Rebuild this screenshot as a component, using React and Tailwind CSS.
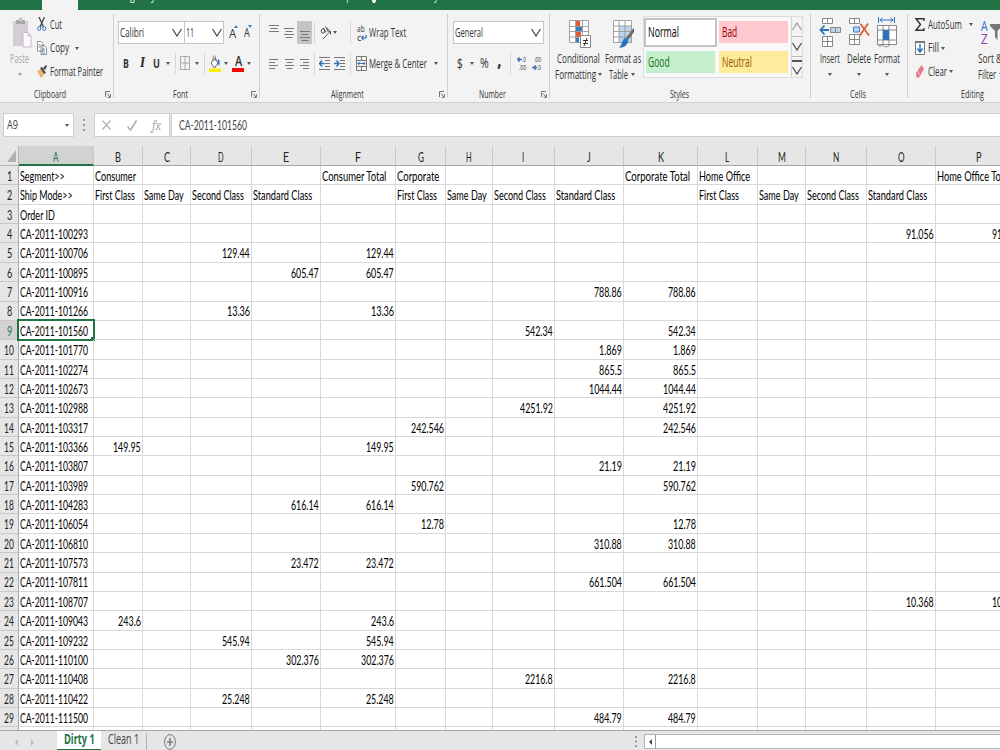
import { useLayoutEffect, useRef, useState } from "react";

// Narrow text: squeezes its content horizontally to the given width
function Fit({ w, className = "", children }) {
  const ref = useRef(null);
  const [scale, setScale] = useState(1);

  useLayoutEffect(() => {
    setScale(w / ref.current.offsetWidth);
  }, [w]);

  return (
    <span className={`block flex-none whitespace-nowrap ${className}`} style={{ width: w }}>
      <span ref={ref} className="inline-block origin-left" style={{ transform: `scaleX(${scale})` }}>
        {children}
      </span>
    </span>
  );
}

function Caret({ className = "" }) {
  return (
    <svg viewBox="0 0 4 3" className={`h-[3px] w-[4px] flex-none ${className}`}>
      <path d="M0 0h4L2 3z" fill="#555" />
    </svg>
  );
}

function Chevron({ className = "" }) {
  return (
    <svg viewBox="0 0 10 9" className={`h-[9px] w-[10px] flex-none ${className}`}>
      <path d="M.5 1 5 8 9.500 1" fill="none" stroke="#444" strokeWidth="1.2" />
    </svg>
  );
}

function Launcher() {
  return (
    <svg viewBox="0 0 6 7" className="h-[7px] w-[6px] flex-none" fill="none" stroke="#666" strokeWidth=".9">
      <path d="M.5 6V.5H5M2 2.500 5 6M5.400 3v3.400H2.500" />
    </svg>
  );
}

function Divider({ className = "" }) {
  return <div className={`h-[22px] w-px flex-none bg-[#d8d8d8] ${className}`} />;
}

function Group({ width, label, labelWidth, launcher, children }) {
  return (
    <div className={`relative flex h-[92px] flex-none flex-col ${width}`}>
      <div className="h-[76px] flex-none">{children}</div>
      <div className={`flex h-[15px] flex-none items-center justify-center ${launcher ? "pr-[14px]" : "pr-[3px]"}`}>
        <Fit w={labelWidth} className="text-[11.500px] leading-[15px]">{label}</Fit>
      </div>
      {launcher && (
        <div className="absolute right-[3px] bottom-[4px]">
          <Launcher />
        </div>
      )}
      <div className="absolute top-[4px] right-0 h-[84px] w-px bg-[#d0d0d0]" />
    </div>
  );
}

function Lines({ kind, className = "" }) {
  const paths = {
    top: "M0 .5h10M1.500 3.500h7M0 6.500h10",
    middle: "M0 .5h10M1.500 3.500h7M0 6.500h10M1.500 9.500h7",
    left: "M0 .5h9M0 3.500h6M0 6.500h9M0 9.500h6",
    center: "M0 .5h9M1.500 3.500h6M0 6.500h9M1.500 9.500h6",
    right: "M0 .5h9M3 3.500h6M0 6.500h9M3 9.500h6",
  };
  return (
    <svg viewBox="0 0 10 10" className={`h-[10px] w-[10px] flex-none ${className}`}>
      <path d={paths[kind]} stroke="#777" strokeWidth="1" />
    </svg>
  );
}

function Clipboard() {
  return (
    <Group width="w-[114px]" label="Clipboard" labelWidth={32} launcher>
      <div className="flex">
        <div className="flex w-[37px] flex-none flex-col items-center pt-[7px] text-[#aaa]">
          <svg viewBox="0 0 20 32" className="ml-[6px] h-[32px] w-[20px]">
            <path d="M1 4h15v25H1z" fill="#d3ced3" />
            <path d="M4 7V3h2.500C7 0 10 0 10.500 3H13v4z" fill="#aaa6aa" />
            <circle cx="8.500" cy="3" r="1" fill="#f3f3f3" />
            <path d="M11 15.500h5l3 3.500v11h-8z" fill="#fbfbfb" stroke="#c4bcc8" />
            <path d="M16 15.500V19h3" fill="none" stroke="#c4bcc8" />
          </svg>
          <Fit w={19} className="mt-[2px] ml-[2px] leading-[15px]">Paste</Fit>
          <Caret className="mt-[7px] ml-[3px] opacity-50" />
        </div>
        <div className="flex flex-col pt-[3px]">
          <div className="flex h-[23px] items-center">
            <svg viewBox="0 0 10 15" className="h-[15px] w-[10px]" fill="none">
              <path d="M2 0 6.500 10M7.500 0 3 10" stroke="#444" strokeWidth="1.300" />
              <ellipse cx="2.200" cy="11.500" rx="1.600" ry="2" stroke="#3b7cc0" />
              <ellipse cx="7.300" cy="11.500" rx="1.600" ry="2" stroke="#3b7cc0" />
            </svg>
            <Fit w={12} className="ml-[3px]">Cut</Fit>
          </div>
          <div className="flex h-[24px] items-center">
            <svg viewBox="0 0 10 14" className="h-[14px] w-[10px]" fill="#fff" stroke="#777" strokeWidth=".8">
              <path d="M.5.5h3.500l2 2.500v7H.5zM4 4.500h3.500l2 2.500v6.500H4z" />
              <path d="M1.500 4h2M1.500 6h2M5 8h3M5 10h3M5 12h3" stroke="#3b7cc0" />
            </svg>
            <Fit w={19} className="ml-[3px]">Copy</Fit>
            <Caret className="ml-[6px]" />
          </div>
          <div className="flex h-[23px] items-center">
            <svg viewBox="0 0 10 13" className="h-[13px] w-[10px]">
              <path d="M0 6 4 4l3 6-3 3z" fill="#eab567" />
              <path d="M3 3l2-1 4 6-2 1zM6 3l3-3 1 1-2 4z" fill="#444" />
            </svg>
            <Fit w={53} className="ml-[3px]">Format Painter</Fit>
          </div>
        </div>
      </div>
    </Group>
  );
}

function Font() {
  return (
    <Group width="w-[146px]" label="Font" labelWidth={15} launcher>
      <div className="flex pt-[11px] pl-[4px]">
        <div className="flex h-[23px] w-[67px] items-center border border-[#c6c6c6] bg-white pl-px">
          <Fit w={24}>Calibri</Fit>
          <Chevron className="ml-[28px]" />
        </div>
        <div className="-ml-px flex h-[23px] w-[40px] items-center border border-[#c6c6c6] bg-white pl-px">
          <Fit w={8}>11</Fit>
          <Chevron className="ml-[18px]" />
        </div>
        <div className="relative ml-[5px] flex h-[23px] items-center text-[13px]">
          <Fit w={7}>A</Fit>
          <Fit w={6} className="ml-[8px] text-[12px]">A</Fit>
          <svg viewBox="0 0 24 4" className="absolute top-[4px] left-0 h-[4px] w-[24px]" fill="#3b7cc0">
            <path d="M5 3l2-3 2 3zM19 0h4l-2 3z" />
          </svg>
        </div>
      </div>
      <div className="flex h-[38px] items-center pl-[9px]">
        <Fit w={6} className="text-[13px] font-bold">B</Fit>
        <Fit w={5} className="ml-[11px] font-serif text-[14px] font-bold italic">I</Fit>
        <Fit w={7} className="ml-[8px] text-[13px] font-bold underline">U</Fit>
        <Caret className="ml-[6px]" />
        <Divider className="ml-[5px]" />
        <svg viewBox="0 0 10 14" className="ml-[4px] h-[14px] w-[10px]" fill="none" stroke="#aaa">
          <path d="M.5.5h9v13h-9zM5 0v14M0 7h10" />
        </svg>
        <Caret className="ml-[5px]" />
        <Divider className="ml-[5px]" />
        <svg viewBox="0 0 12 17" className="ml-[4px] h-[17px] w-[12px]">
          <path d="M2 8 6 3l3 5-3.500 5z" fill="#fff" stroke="#666" />
          <path d="M4 6V2.500C4 .5 6.500.5 6.500 2.500V6" fill="none" stroke="#666" strokeWidth=".8" />
          <path d="M9 4c2 1 2 4 1 7L8.500 8z" fill="#2f6fb5" />
          <path d="M0 13.500h12V17H0z" fill="#ffef00" />
        </svg>
        <Caret className="ml-[3px]" />
        <div className="relative ml-[4px] flex h-[17px] w-[12px] justify-center">
          <Fit w={7} className="-mt-px text-[14px] leading-[13px] font-semibold">A</Fit>
          <div className="absolute bottom-0 left-0 h-[4px] w-[12px] bg-[#ff0000]" />
        </div>
        <Caret className="ml-[3px]" />
      </div>
    </Group>
  );
}

function Indent({ flip, className = "" }) {
  return (
    <svg viewBox="0 0 11 13" className={`h-[13px] w-[11px] flex-none ${className}`} fill="none">
      <path d="M0 .5h11M6 3.500h5M6 6.500h5M6 9.500h5M0 12.500h11" stroke="#777" />
      <path d={flip ? "M0 6.500h5M2.500 3.500 5 6.500l-2.500 3" : "M0 6.500h5.500M3 3.500.5 6.500 3 9.500"} stroke="#2f6fb5" strokeWidth="1.400" />
    </svg>
  );
}

function Alignment() {
  return (
    <Group width="w-[188px]" label="Alignment" labelWidth={33} launcher>
      <div className="flex h-[45px] items-center pl-[9px]">
        <Lines kind="top" className="-mt-[6px]" />
        <Lines kind="middle" className="ml-[5px]" />
        <div className="ml-[3px] flex h-[23px] w-[15px] items-center justify-center bg-[#c5c5c5]">
          <Lines kind="middle" className="mt-[6px]" />
        </div>
        <Divider className="ml-[2px]" />
        <svg viewBox="0 0 12 14" className="ml-[5px] h-[14px] w-[12px]" fill="none" stroke="#555">
          <path d="M3 13 10.500 5M7.500 5h3v3.500" />
          <ellipse cx="3" cy="5" rx="1.800" ry="2.200" />
          <path d="M3.500 2 6 6.500M5.500.5 8 5.500M6 3c2-1.500 3 0 1.500 2" />
        </svg>
        <Caret className="ml-px" />
        <Divider className="ml-[13px]" />
        <div className="ml-[6px] flex h-[18px] w-[10px] flex-col text-[9px] leading-[9px]">
          <Fit w={8}>ab</Fit>
          <div className="flex">
            <Fit w={4}>c</Fit>
            <svg viewBox="0 0 6 6" className="mt-[2px] h-[6px] w-[6px]" fill="none" stroke="#2f6fb5" strokeWidth="1.200">
              <path d="M5 0v3H1M2.500 1 .7 3l1.800 2" />
            </svg>
          </div>
        </div>
        <Fit w={37} className="ml-[2px]">Wrap Text</Fit>
      </div>
      <div className="flex h-[17px] items-center pl-[9px]">
        <Lines kind="left" />
        <Lines kind="center" className="ml-[6px]" />
        <Lines kind="right" className="ml-[5px]" />
        <Divider className="ml-[4px]" />
        <Indent className="ml-[4px]" />
        <Indent flip className="ml-[4px]" />
        <Divider className="ml-[5px]" />
        <svg viewBox="0 0 11 15" className="ml-[5px] h-[15px] w-[11px] flex-none" fill="none">
          <path d="M.5.5h10v14H.5zM0 4.500h11M0 10.500h11M5.500 0v4M5.500 11v4" stroke="#777" />
          <path d="M2 7.500h7M3.500 5.800 2 7.500l1.500 1.700M7.500 5.800 9 7.500 7.500 9.200" stroke="#2f6fb5" />
        </svg>
        <Fit w={58} className="ml-[2px]">Merge &amp; Center</Fit>
        <Caret className="ml-[7px]" />
      </div>
    </Group>
  );
}

function Decimals({ top, bottom, left }) {
  const arrow = (
    <svg viewBox="0 0 5 5" className="h-[5px] w-[5px] flex-none" fill="none" stroke="#2f6fb5" strokeWidth="1.300">
      <path d={left ? "M5 2.500H.7M2.500.3.7 2.500l1.800 2.200" : "M0 2.500h4.300M2.500.3l1.800 2.200-1.800 2.200"} />
    </svg>
  );
  return (
    <div className="flex w-[10px] flex-none flex-col items-end text-[8px] leading-[8px]">
      <div className="flex items-center">
        {left && arrow}
        <Fit w={left ? 4 : 7}>{top}</Fit>
      </div>
      <div className="flex items-center">
        {!left && arrow}
        <Fit w={left ? 7 : 4}>{bottom}</Fit>
      </div>
    </div>
  );
}

function NumberGroup() {
  return (
    <Group width="w-[102px]" label="Number" labelWidth={27} launcher>
      <div className="pt-[11px] pl-[5px]">
        <div className="flex h-[23px] w-[91px] items-center border border-[#c6c6c6] bg-white pl-px">
          <Fit w={28}>General</Fit>
          <Chevron className="ml-[48px]" />
        </div>
      </div>
      <div className="flex h-[38px] items-center pl-[9px]">
        <Fit w={6} className="text-[15px]">$</Fit>
        <Caret className="ml-[7px]" />
        <Fit w={9} className="ml-[6px] text-[14px]">%</Fit>
        <Fit w={5} className="-mt-[9px] ml-[8px] text-[20px] font-bold">,</Fit>
        <Divider className="ml-[8px]" />
        <div className="ml-[5px] flex gap-[5px]">
          <Decimals left top=".0" bottom=".00" />
          <Decimals top=".00" bottom=".0" />
        </div>
      </div>
    </Group>
  );
}

function Styles() {
  return (
    <Group width="w-[261px]" label="Styles" labelWidth={19}>
      <div className="flex">
        <div className="flex w-[51px] flex-none flex-col items-end pt-[10px]">
          <svg viewBox="0 0 22 28" className="mr-[10px] h-[28px] w-[22px]">
            <path d="M.5.5h19v22H.5z" fill="#fff" />
            <path d="M7 1h4v5H7zM7 12h5v5H7z" fill="#e05a3a" />
            <path d="M7 6.500h6v5H7zM7 17.500h3v5H7z" fill="#3b7cc0" />
            <path d="M.5.5h19v22H.5zM0 6.500h20M0 11.500h20M0 17h20M6.500 0v22M13.500 0v22" fill="none" stroke="#999" strokeWidth=".9" />
            <path d="M11.500 15.500h10v12h-10z" fill="#fff" stroke="#888" />
            <path d="M14 20.500h5M14 23.500h5M18 18l-3 8" stroke="#333" />
          </svg>
          <Fit w={43} className="mt-[3px] mr-px leading-[15px]">Conditional</Fit>
          <div className="-mr-px mt-px flex items-center leading-[15px]">
            <Fit w={41}>Formatting</Fit>
            <Caret className="ml-[2px]" />
          </div>
        </div>
        <div className="flex w-[42px] flex-none flex-col items-center pt-[10px]">
          <svg viewBox="0 0 22 28" className="ml-[4px] h-[28px] w-[22px]">
            <path d="M.5.5h18v22H.5z" fill="#fff" />
            <path d="M6 6h13v17H6z" fill="#bcd5ee" />
            <path d="M.5.5h18v22H.5zM0 6h19M0 11.500h19M0 17h19M6 0v22M12 0v22" fill="none" stroke="#999" strokeWidth=".9" />
            <path d="M21 7.500V12l-6 8-2-2z" fill="#666" />
            <path d="M12 18c3 0 4 3 2 6-2 3-5 4-8 3.500 3-2 3-8 6-9.500z" fill="#2f72bd" />
          </svg>
          <Fit w={36} className="mt-[3px] ml-px leading-[15px]">Format as</Fit>
          <div className="mt-px flex items-center leading-[15px]">
            <Fit w={19}>Table</Fit>
            <Caret className="ml-[3px]" />
          </div>
        </div>
        <div className="mt-[6px] flex h-[62px] w-[160px] border border-[#dcdcdc] bg-[#f8f8f8] text-[14px]">
          <div className="grid w-[147px] flex-none grid-cols-2 grid-rows-2 items-center">
            <div className="flex h-[29px] w-[73px] items-center border-2 border-[#c3c3c3] bg-white pl-[2px] text-black">
              <Fit w={31}>Normal</Fit>
            </div>
            <div className="ml-px flex h-[22px] w-[69px] items-center bg-[#ffc7ce] pl-[3px] text-[#9c0006]">
              <Fit w={15}>Bad</Fit>
            </div>
            <div className="ml-[2px] flex h-[22px] w-[69px] items-center bg-[#c6efce] pl-[2px] text-[#18751c]">
              <Fit w={22}>Good</Fit>
            </div>
            <div className="ml-px flex h-[22px] w-[69px] items-center bg-[#ffeb9c] pl-[3px] text-[#9c5700]">
              <Fit w={30}>Neutral</Fit>
            </div>
          </div>
          <div className="flex w-[11px] flex-none flex-col border-l border-[#d0d0d0] bg-[#f3f3f3]">
            <div className="flex h-[20px] items-center border-b border-[#bbb]">
              <Chevron className="rotate-180 opacity-50" />
            </div>
            <div className="flex h-[20px] items-center border-b border-[#bbb]">
              <Chevron />
            </div>
            <div className="flex h-[20px] flex-col pt-[3px]">
              <div className="h-[1.500px] w-[10px] bg-[#555]" />
              <Chevron className="mt-[4px]" />
            </div>
          </div>
        </div>
      </div>
    </Group>
  );
}

function BigButton({ label, w, className = "", children }) {
  return (
    <div className={`flex flex-none flex-col items-center pt-[7px] ${className}`}>
      <svg viewBox="0 0 22 31" className="h-[31px] w-[22px]" fill="none" stroke="#888">
        {children}
      </svg>
      <Fit w={w} className="mt-[3px] leading-[15px]">{label}</Fit>
      <Caret className="mt-[7px]" />
    </div>
  );
}

function Cells() {
  return (
    <Group width="w-[97px]" label="Cells" labelWidth={16}>
      <div className="flex pl-[7px]">
        <BigButton label="Insert" w={20} className="w-[24px]">
          <path d="M3.500 1.500h10v5h-10zM8.500 1.500v5M3.500 19.500h10v10h-10zM8.500 19.500v10M3.500 24.500h10" fill="#fff" />
          <path d="M11.500 10.500h10v5h-10zM16.500 10.500v5" fill="#bcd5ee" />
          <path d="M10 13H1.500M5.500 8.500 1.500 13l4 4.500" stroke="#2f72bd" strokeWidth="1.800" />
        </BigButton>
        <BigButton label="Delete" w={24} className="ml-[4px] w-[26px]">
          <path d="M1.500 1.500h10v5h-10zM6.500 1.500v5M1.500 17.500h10v10h-10zM6.500 17.500v10M1.500 22.500h10" fill="#fff" />
          <path d="M5.500 10h6v5h-6z" fill="#bcd5ee" stroke="#3b7cc0" />
          <path d="M12.500 7 21 18.500M20 6.500 12 18.500" stroke="#dd5a32" strokeWidth="1.800" />
        </BigButton>
        <BigButton label="Format" w={26} className="ml-px w-[28px]">
          <path d="M2.500 0v6M18.500 0v6M3.500 3h14M6.500.8 4 3l2.500 2.200M14.500.8 17 3l-2.500 2.200" stroke="#2f72bd" />
          <path d="M1.500 8.500h19v19h-19zM1 13h20M1 23h20M7 8v20M13 8v20" fill="#fff" />
          <path d="M7 13h6v10H7z" fill="#2f72bd" stroke="none" />
          <path d="M2 28c2 3 4-1 6 1s5 0 6-1" />
        </BigButton>
      </div>
    </Group>
  );
}

function Editing() {
  return (
    <div className="flex h-[92px] w-[110px] flex-none flex-col">
      <div className="flex h-[76px] flex-none">
        <div className="flex w-[69px] flex-none flex-col pt-[3px] pl-[7px]">
          <div className="flex h-[23px] items-center">
            <svg viewBox="0 0 10 13" className="h-[13px] w-[10px] flex-none" fill="none" stroke="#333" strokeWidth="1.400">
              <path d="M9 3V.8H1L5.500 6.500 1 12.200h8V10" />
            </svg>
            <Fit w={34} className="ml-[3px]">AutoSum</Fit>
            <Caret className="ml-[7px]" />
          </div>
          <div className="flex h-[24px] items-center">
            <svg viewBox="0 0 10 14" className="h-[14px] w-[10px]" fill="none">
              <path d="M.5.5h9v13h-9z" fill="#fff" stroke="#777" />
              <path d="M0 1h10" stroke="#777" strokeWidth="2" />
              <path d="M5 3v8M2.300 7.500 5 11l2.700-3.500" stroke="#2f72bd" strokeWidth="1.500" />
            </svg>
            <Fit w={11} className="ml-[3px]">Fill</Fit>
            <Caret className="ml-[2px]" />
          </div>
          <div className="flex h-[23px] items-center">
            <svg viewBox="0 0 10 13" className="h-[13px] w-[10px]">
              <path d="M1 8 6.500 0 9 4 4 12.500H1.500z" fill="#e8788a" />
              <path d="M2.500 6 5 10" stroke="#f8c4cc" />
            </svg>
            <Fit w={19} className="ml-[3px]">Clear</Fit>
            <Caret className="ml-[2px]" />
          </div>
        </div>
        <div className="flex w-[40px] flex-none flex-col pt-[7px]">
          <div className="flex h-[31px] pl-[4px]">
            <div className="flex w-[9px] flex-col text-[15px] leading-[13px]">
              <Fit w={7} className="pt-[2px] text-[#2f72bd]">A</Fit>
              <Fit w={7} className="text-[#8a3fb5]">Z</Fit>
            </div>
            <svg viewBox="0 0 12 16" className="mt-[7px] h-[16px] w-[12px]">
              <path d="M0 0h12v2L7.500 7v9L5 13V7L0 2z" fill="#777" />
            </svg>
          </div>
          <Fit w={24} className="mt-[3px] ml-px leading-[15px]">Sort &amp;</Fit>
          <div className="mt-px ml-px flex items-center leading-[15px]">
            <Fit w={18}>Filter</Fit>
            <Caret className="ml-[3px]" />
          </div>
        </div>
      </div>
      <Fit w={23} className="ml-[53px] text-[11.500px] leading-[15px]">Editing</Fit>
    </div>
  );
}

function FormulaBar() {
  return (
    <div className="flex h-[43px] flex-none items-start pt-[10px] pl-[3px] text-[#444]">
      <div className="flex h-[24px] w-[71px] flex-none items-center justify-between border border-[#cfcfcf] bg-white pr-[4px] pl-[3px]">
        <Fit w={11}>A9</Fit>
        <Caret />
      </div>
      <svg viewBox="0 0 2 12" className="mt-[6px] ml-[9px] h-[12px] w-[2px] flex-none" fill="#999">
        <path d="M0 0h2v2H0zM0 5h2v2H0zM0 10h2v2H0z" />
      </svg>
      <div className="ml-[9px] flex h-[24px] w-[76px] flex-none items-center border border-[#cfcfcf] bg-white pl-[7px]">
        <svg viewBox="0 0 9 10" className="h-[10px] w-[9px]" stroke="#b5b5b5" strokeWidth="1.300">
          <path d="M.5.5l8 9M8.500.5l-8 9" />
        </svg>
        <svg viewBox="0 0 10 11" className="ml-[16px] h-[11px] w-[10px]" fill="none" stroke="#b5b5b5" strokeWidth="1.800">
          <path d="M.5 6.500 3.500 10 9.500.5" />
        </svg>
        <Fit w={9} className="ml-[15px] font-serif text-[15px] text-[#aaa] italic">fx</Fit>
      </div>
      <div className="ml-px flex h-[24px] flex-1 items-center border border-r-0 border-[#cfcfcf] bg-white pl-[7px]">
        <Fit w={68} className="font-[Lato,sans-serif] text-[12.700px]">CA-2011-101560</Fit>
      </div>
    </div>
  );
}

const columns = [
  ["A", 75], ["B", 49], ["C", 48], ["D", 61], ["E", 69], ["F", 75], ["G", 50], ["H", 47],
  ["I", 62], ["J", 69], ["K", 74], ["L", 60], ["M", 48], ["N", 61], ["O", 69], ["P", 86],
];

const letterWidths = { I: 2.5, J: 3.5, L: 4.5, M: 8, N: 6.5, O: 6.5 };

// rendered width of every text label in the sheet
const textWidths = {
  "Segment>>": 45, "Ship Mode>>": 53, "Order ID": 35, Consumer: 41, "Consumer Total": 64,
  Corporate: 42, "Corporate Total": 65, "Home Office": 51, "Home Office Total": 74,
  "First Class": 40, "Same Day": 40, "Second Class": 52, "Standard Class": 59,
};

const rows = [
  { A: "Segment>>", B: "Consumer", F: "Consumer Total", G: "Corporate", K: "Corporate Total", L: "Home Office", P: "Home Office Total" },
  {
    A: "Ship Mode>>", B: "First Class", C: "Same Day", D: "Second Class", E: "Standard Class",
    G: "First Class", H: "Same Day", I: "Second Class", J: "Standard Class",
    L: "First Class", M: "Same Day", N: "Second Class", O: "Standard Class",
  },
  { A: "Order ID" },
  { A: "CA-2011-100293", O: 91.056, P: 91.056 },
  { A: "CA-2011-100706", D: 129.44, F: 129.44 },
  { A: "CA-2011-100895", E: 605.47, F: 605.47 },
  { A: "CA-2011-100916", J: 788.86, K: 788.86 },
  { A: "CA-2011-101266", D: 13.36, F: 13.36 },
  { A: "CA-2011-101560", I: 542.34, K: 542.34 },
  { A: "CA-2011-101770", J: 1.869, K: 1.869 },
  { A: "CA-2011-102274", J: 865.5, K: 865.5 },
  { A: "CA-2011-102673", J: 1044.44, K: 1044.44 },
  { A: "CA-2011-102988", I: 4251.92, K: 4251.92 },
  { A: "CA-2011-103317", G: 242.546, K: 242.546 },
  { A: "CA-2011-103366", B: 149.95, F: 149.95 },
  { A: "CA-2011-103807", J: 21.19, K: 21.19 },
  { A: "CA-2011-103989", G: 590.762, K: 590.762 },
  { A: "CA-2011-104283", E: 616.14, F: 616.14 },
  { A: "CA-2011-106054", G: 12.78, K: 12.78 },
  { A: "CA-2011-106810", J: 310.88, K: 310.88 },
  { A: "CA-2011-107573", E: 23.472, F: 23.472 },
  { A: "CA-2011-107811", J: 661.504, K: 661.504 },
  { A: "CA-2011-108707", O: 10.368, P: 10.368 },
  { A: "CA-2011-109043", B: 243.6, F: 243.6 },
  { A: "CA-2011-109232", D: 545.94, F: 545.94 },
  { A: "CA-2011-110100", E: 302.376, F: 302.376 },
  { A: "CA-2011-110408", I: 2216.8, K: 2216.8 },
  { A: "CA-2011-110422", D: 25.248, F: 25.248 },
  { A: "CA-2011-111500", J: 484.79, K: 484.79 },
  {},
];

function Cell({ value, width, selected }) {
  const isNumber = typeof value === "number";
  const text = value === undefined ? "" : String(value);
  const w = isNumber ? (text.length - 1) * 5.07 + 2.5 : textWidths[text] || 68;

  return (
    <div
      className={`relative flex flex-none items-center border-r border-b border-[#d9d9d9] pt-[1.500px] pr-[1.500px] pl-[1.200px] ${isNumber ? "justify-end" : ""}`}
      style={{ width }}
    >
      {text && <Fit w={w}>{text}</Fit>}
      {selected && (
        <div className="absolute -top-[1px] -right-[1px] -bottom-[1px] -left-[1px] border-[1.500px] border-[#217346] outline-[0.500px] outline-[#217346]">
          <div className="absolute -right-[2px] -bottom-[2px] h-[4px] w-[4px] bg-[#217346]" />
        </div>
      )}
    </div>
  );
}

function Sheet() {
  return (
    <div className="flex h-[584px] flex-none flex-col overflow-hidden bg-white font-[Lato,sans-serif] text-[12.700px] leading-[18px] text-black">
      <div className="flex h-[20px] flex-none bg-[#e6e6e6]">
        <div className="flex w-[19px] flex-none items-end justify-end border-r border-b border-[#b5b5b5] pr-[2px] pb-[3px]">
          <svg viewBox="0 0 9 12" className="h-[12px] w-[9px]">
            <path d="M9 0v12H0z" fill="#b1b1b1" />
          </svg>
        </div>
        {columns.map(([name, width]) => (
          <div
            key={name}
            className={`flex flex-none items-center justify-center border-r border-r-[#c8c8c8] ${
              name === "A"
                ? "border-b-2 border-b-[#217346] bg-[#d2d2d2] pt-[3px] text-[#217346]"
                : "border-b border-b-[#a6a6a6] pt-[2px] text-[#222]"
            }`}
            style={{ width }}
          >
            <Fit w={letterWidths[name] || 5.8}>{name}</Fit>
          </div>
        ))}
      </div>
      {rows.map((row, i) => (
        <div key={i} className="flex h-[19.360px] flex-none">
          <div
            className={`flex w-[19px] flex-none items-center justify-center border-r border-b border-r-[#a6a6a6] border-b-[#c8c8c8] pt-[1.500px] ${
              i === 8 ? "bg-[#d2d2d2] text-[#217346]" : "bg-[#e6e6e6] text-[#222]"
            }`}
          >
            {i < 29 && <Fit w={i < 9 ? 5 : 10}>{i + 1}</Fit>}
          </div>
          {columns.map(([name, width]) => (
            <Cell key={name} value={row[name]} width={width} selected={i === 8 && name === "A"} />
          ))}
        </div>
      ))}
    </div>
  );
}

function SheetTabs() {
  return (
    <div className="flex h-[20px] flex-none border-t border-[#a6a6a6] bg-[#e6e6e6] text-[14px] leading-[15px] text-[#444]">
      <svg viewBox="0 0 20 7" className="mt-[8px] ml-[15px] h-[7px] w-[20px] flex-none" fill="#bbb">
        <path d="M3 0v7L0 3.500zM16 0v7l3-3.500z" />
      </svg>
      <div className="ml-[22px] flex w-[44px] flex-none justify-center border-b border-[#217346] bg-white font-bold text-[#217346]">
        <Fit w={31}>Dirty 1</Fit>
      </div>
      <div className="flex w-[45px] flex-none pl-[7px]">
        <Fit w={31}>Clean 1</Fit>
      </div>
      <div className="mt-[2px] h-[17px] w-px flex-none bg-[#b0b0b0]" />
      <svg viewBox="0 0 12 16" className="mt-[3px] ml-[17px] h-[16px] w-[12px] flex-none" fill="none" stroke="#777">
        <ellipse cx="6" cy="8" rx="5.400" ry="7.400" />
        <path d="M6 4v8M3 8h6" strokeWidth="1.500" />
      </svg>
      <svg viewBox="0 0 2 11" className="mt-[5px] ml-[459px] h-[11px] w-[2px] flex-none" fill="#999">
        <path d="M0 0h2v2H0zM0 4.500h2v2H0zM0 9h2v2H0z" />
      </svg>
      <div className="mt-[3px] ml-[7px] flex h-[15px] flex-1 border-y border-l border-[#b5b5b5] bg-white">
        <div className="flex w-[11px] flex-none items-center justify-center border-r border-[#999]">
          <svg viewBox="0 0 3 6" className="h-[6px] w-[3px]">
            <path d="M3 0v6L0 3z" fill="#444" />
          </svg>
        </div>
      </div>
    </div>
  );
}

function App() {
  return (
    <div className="flex h-[750px] w-[1000px] flex-col overflow-hidden bg-[#e6e6e6] font-['Open_Sans','Noto_Sans',sans-serif] text-[12.500px] leading-[16px] text-[#333]">
      {/* ribbon tabs, scrolled almost out of view */}
      <div className="flex h-[10px] flex-none bg-[#217346] text-white">
        <div className="ml-[42px] h-[10px] w-[36px] flex-none bg-[#f3f3f3]" />
        <div className="flex h-[10px] flex-1 overflow-hidden">
          <Fit w={49} className="-mt-[12px] ml-[42px]">Page Layout</Fit>
          <Fit w={16} className="-mt-[12px] ml-[166px]">Help</Fit>
          <svg viewBox="0 0 4 3" className="ml-[21px] h-[3px] w-[4px] flex-none">
            <path d="M0 0h4v1L3 3H1L0 1z" fill="#fff" />
          </svg>
          <Fit w={100} className="-mt-[12px] ml-[11px]">Tell me what you want to do</Fit>
        </div>
      </div>
      <div className="flex h-[92px] flex-none bg-[#f3f3f3]">
        <Clipboard />
        <Font />
        <Alignment />
        <NumberGroup />
        <Styles />
        <Cells />
        <Editing />
      </div>
      <div className="h-px flex-none bg-[#d2d2d2]" />
      <FormulaBar />
      <Sheet />
      <SheetTabs />
    </div>
  );
}

export default App;
